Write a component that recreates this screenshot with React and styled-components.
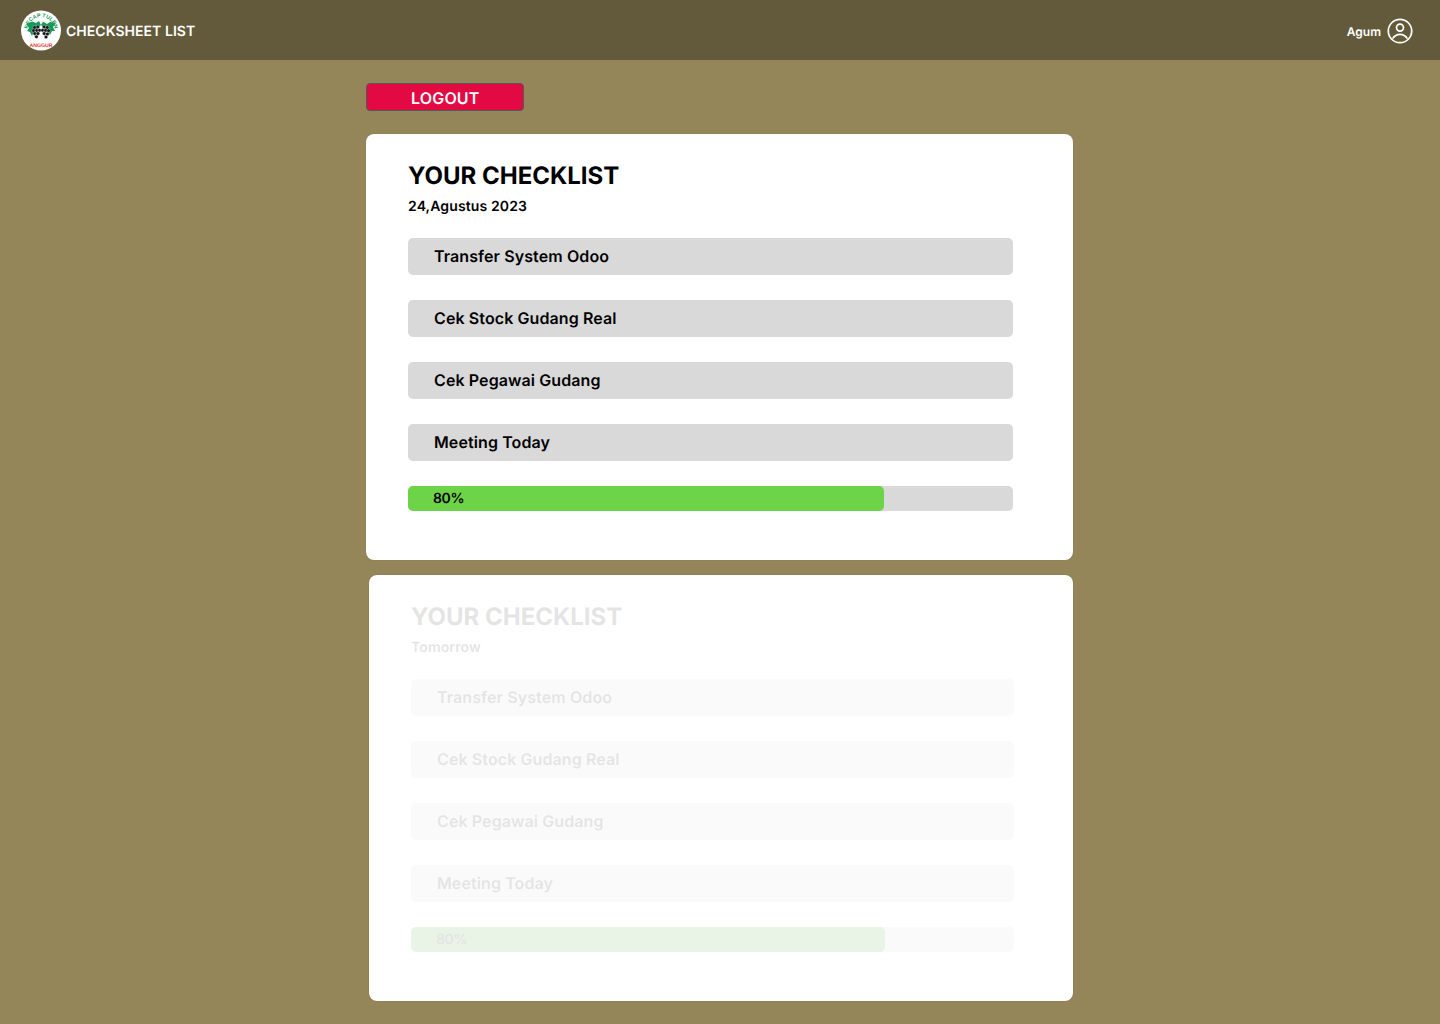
import React from "react"
import styled, { createGlobalStyle } from "styled-components"

const GlobalStyle = createGlobalStyle`
  html, body {
    margin: 0;
    padding: 0;
    background: #948659;
    font-family: Inter, "Liberation Sans", sans-serif;
    text-rendering: geometricPrecision;
  }
`

const Page = styled.div`
  width: 1440px;
  height: 1024px;
  overflow: hidden;
  background: #948659;
`

const Header = styled.header`
  height: 60px;
  background: #635a3b;
  display: flex;
  align-items: center;
  justify-content: space-between;
  padding: 0 27px 0 21px;
  box-sizing: border-box;
  color: #fff;
`

const Brand = styled.div`
  display: flex;
  align-items: center;
  gap: 5px;
`

const BrandTitle = styled.span`
  padding-top: 2px;
  font-size: 14px;
  font-weight: 600;
  line-height: 17px;
  letter-spacing: 0.04px;
`

const User = styled.div`
  display: flex;
  align-items: center;
  gap: 6px;
  padding-top: 2px;
`

const UserName = styled.span`
  font-size: 12px;
  font-weight: 600;
  line-height: 15px;
`

const Main = styled.main`
  width: 707px;
  margin-left: 366px;
  padding-top: 23px;
  display: flex;
  flex-direction: column;
  align-items: flex-end;
`

const LogoutButton = styled.button`
  align-self: flex-start;
  width: 158px;
  height: 28px;
  margin-bottom: 23px;
  padding: 0 0 0 44px;
  box-sizing: border-box;
  border: 1px solid #4f5a5b;
  border-radius: 4px;
  background: #e30943;
  color: #fff;
  font-family: inherit;
  font-size: 16px;
  font-weight: 600;
  line-height: 28px;
  letter-spacing: 0.17px;
  text-align: left;
  text-rendering: geometricPrecision;
`

const Card = styled.section`
  width: ${props => props.$width}px;
  height: 426px;
  margin-bottom: 15px;
  padding: 27px ${props => props.$inset}px 0 42px;
  box-sizing: border-box;
  background: #fff;
  border-radius: 8px;
  box-shadow: 0 0 1px rgba(0, 0, 0, 0.25);
`

const CardBody = styled.div`
  opacity: ${props => (props.$faded ? 0.1 : 1)};
`

const Title = styled.h2`
  margin: 0;
  font-size: 24px;
  font-weight: 700;
  line-height: 29px;
  color: #000;
`

const DateLabel = styled.p`
  margin: 8px 0 23px;
  font-size: 14px;
  font-weight: 600;
  line-height: 17px;
  letter-spacing: 0.13px;
  color: #000;
`

const TaskList = styled.div`
  display: flex;
  flex-direction: column;
  gap: 25px;
`

const Task = styled.div`
  height: 37px;
  padding-left: 26px;
  border-radius: 5px;
  background: #d9d9d9;
  font-size: 16px;
  font-weight: 600;
  line-height: 37px;
  letter-spacing: 0.1px;
  color: #000;
`

const ProgressTrack = styled.div`
  height: 25px;
  border-radius: 5px;
  background: #d9d9d9;
`

const ProgressFill = styled.div`
  height: 100%;
  padding-left: 25px;
  box-sizing: border-box;
  border-radius: 5px;
  background: ${props => (props.$faded ? "#379b19" : "#6cd446")};
  font-size: 14px;
  font-weight: 600;
  line-height: 26px;
  letter-spacing: -0.4px;
  color: #000;
`

const Logo = () => (
  <svg width="40" height="41" viewBox="0 0 40 41">
    <defs>
      <path id="logo-arc" d="M6.6 20.5 A13.4 13.4 0 0 1 33.4 20.5" />
    </defs>
    <circle cx="20" cy="20.5" r="20" fill="#fff" />
    <text fontFamily="Liberation Sans, sans-serif" fontSize="5.4" fontWeight="700" fill="#17975a">
      <textPath href="#logo-arc" startOffset="50%" textAnchor="middle">
        KECAP TULEN
      </textPath>
    </text>
    <g fill="#169a57">
      <path d="M5 14 L11 11.5 L15 13 L18 11 L20 15 L13 22 L11 26 L9 22 L6 21 L8 18 Z" />
      <path d="M35 13 L29 12 L26 14 L22 11.5 L20 15 L27 22 L29 25 L31 21 L34 21 L32 17 Z" />
    </g>
    <g fill="#15151a" stroke="#fff" strokeWidth="0.3">
      <circle cx="13.5" cy="17.5" r="1.8" />
      <circle cx="16.8" cy="17" r="1.8" />
      <circle cx="12.6" cy="20.6" r="1.8" />
      <circle cx="15.8" cy="20.4" r="1.8" />
      <circle cx="18.6" cy="20.2" r="1.8" />
      <circle cx="13.8" cy="23.6" r="1.8" />
      <circle cx="17" cy="23.6" r="1.8" />
      <circle cx="15.4" cy="26.8" r="1.8" />
      <circle cx="23" cy="17" r="1.8" />
      <circle cx="26.2" cy="17.5" r="1.8" />
      <circle cx="21.6" cy="20.2" r="1.8" />
      <circle cx="24.6" cy="20.4" r="1.8" />
      <circle cx="27.6" cy="20.8" r="1.8" />
      <circle cx="23.2" cy="23.6" r="1.8" />
      <circle cx="26.4" cy="24" r="1.8" />
      <circle cx="25" cy="27" r="1.8" />
    </g>
    <text x="20" y="36.5" textAnchor="middle" fontFamily="Liberation Sans, sans-serif" fontSize="5.2" fontWeight="700" fill="#e2352f">
      ANGGUR
    </text>
  </svg>
)

const UserIcon = () => (
  <svg width="26" height="26" viewBox="0 0 26 26" fill="none" stroke="#fff" strokeWidth="1.7">
    <circle cx="13" cy="13" r="11.7" />
    <circle cx="13" cy="9.6" r="3.5" />
    <path d="M5.6 20.6 C7.6 17.6 10.4 16.4 13 16.4 C15.6 16.4 18.4 17.6 20.4 20.6" />
  </svg>
)

const tasks = [
  "Transfer System Odoo",
  "Cek Stock Gudang Real",
  "Cek Pegawai Gudang",
  "Meeting Today",
]

const Checklist = ({ date, width, inset, progress, faded }) => (
  <Card $width={width} $inset={inset}>
    <CardBody $faded={faded}>
      <Title>YOUR CHECKLIST</Title>
      <DateLabel>{date}</DateLabel>
      <TaskList>
        {tasks.map(task => (
          <Task key={task}>{task}</Task>
        ))}
        <ProgressTrack>
          <ProgressFill $faded={faded} style={{ width: `${progress}%` }}>
            80%
          </ProgressFill>
        </ProgressTrack>
      </TaskList>
    </CardBody>
  </Card>
)

const App = () => (
  <Page>
    <GlobalStyle />
    <Header>
      <Brand>
        <Logo />
        <BrandTitle>CHECKSHEET LIST</BrandTitle>
      </Brand>
      <User>
        <UserName>Agum</UserName>
        <UserIcon />
      </User>
    </Header>
    <Main>
      <LogoutButton>LOGOUT</LogoutButton>
      <Checklist date="24,Agustus 2023" width={707} inset={60} progress={78.7} />
      <Checklist date="Tomorrow" width={704} inset={59} progress={78.6} faded />
    </Main>
  </Page>
)

export default App
